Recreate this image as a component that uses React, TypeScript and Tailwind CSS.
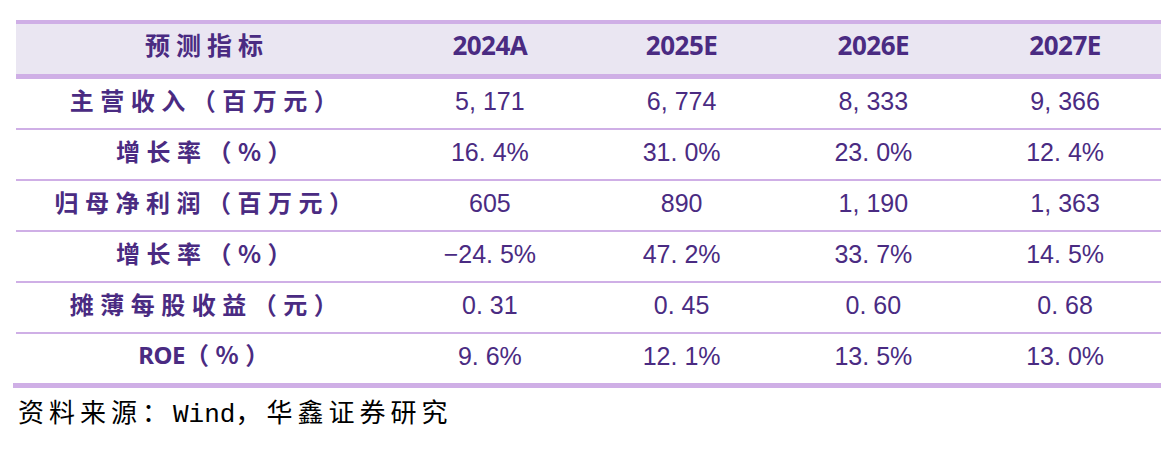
const cols = ["2024A", "2025E", "2026E", "2027E"];

const rows: { label: React.ReactNode; values: string[] }[] = [
  { label: "主营收入（百万元）", values: ["5, 171", "6, 774", "8, 333", "9, 366"] },
  { label: "增长率（%）", values: ["16. 4%", "31. 0%", "23. 0%", "12. 4%"] },
  { label: "归母净利润（百万元）", values: ["605", "890", "1, 190", "1, 363"] },
  { label: "增长率（%）", values: ["−24. 5%", "47. 2%", "33. 7%", "14. 5%"] },
  { label: "摊薄每股收益（元）", values: ["0. 31", "0. 45", "0. 60", "0. 68"] },
  {
    label: (
      <>
        <span className="font-['Noto_Sans',sans-serif] tracking-[-0.5px]">ROE</span>（%）
      </>
    ),
    values: ["9. 6%", "12. 1%", "13. 5%", "13. 0%"],
  },
];

const cjk = "font-['Noto_Sans_CJK_SC','Noto_Sans',sans-serif]";

export default function App() {
  return (
    <div className="h-[453px] w-[1171px] bg-white pt-5">
      <div className="ml-4 w-[1145px]">
        {/* Header */}
        <div className="grid grid-cols-[378px_repeat(4,1fr)] border-t-4 border-b-[5px] border-[#cfafe6] bg-[#eae6f2] text-[#4a2b82]">
          <div className={`flex h-[50px] items-center justify-center pb-2 pl-1 text-[25px] font-bold tracking-[6px] ${cjk}`}>
            预测指标
          </div>
          {cols.map((c) => (
            <div
              key={c}
              className="flex h-[50px] items-center justify-center pb-2 font-['Noto_Sans',sans-serif] text-[26px] font-bold tracking-[-0.5px]"
            >
              {c}
            </div>
          ))}
        </div>

        {/* Body */}
        {rows.map((r, i) => (
          <div
            key={i}
            className={`grid grid-cols-[378px_repeat(4,1fr)] text-[#4a2b82] ${
              i < rows.length - 1 ? "border-b-2 border-[#cfafe6]" : ""
            }`}
          >
            <div className={`flex h-[49px] items-center justify-center pb-2 pl-1 text-[24px] font-bold tracking-[6.5px] ${cjk}`}>
              <span>{r.label}</span>
            </div>
            {r.values.map((v, j) => (
              <div
                key={j}
                className="flex h-[49px] items-center justify-center pb-1 font-['Liberation_Sans',sans-serif] text-[25px]"
              >
                {v}
              </div>
            ))}
          </div>
        ))}
      </div>
      <div className="ml-[13px] w-[1148px] border-t-[5px] border-[#cfafe6]" />

      {/* Footer */}
      <div className={`ml-[18px] mt-[3px] text-[26px] tracking-[5px] text-black ${cjk}`}>
        资料来源：<span className="font-['Liberation_Mono',monospace] tracking-[0px]">Wind</span>，华鑫证券研究
      </div>
    </div>
  );
}
